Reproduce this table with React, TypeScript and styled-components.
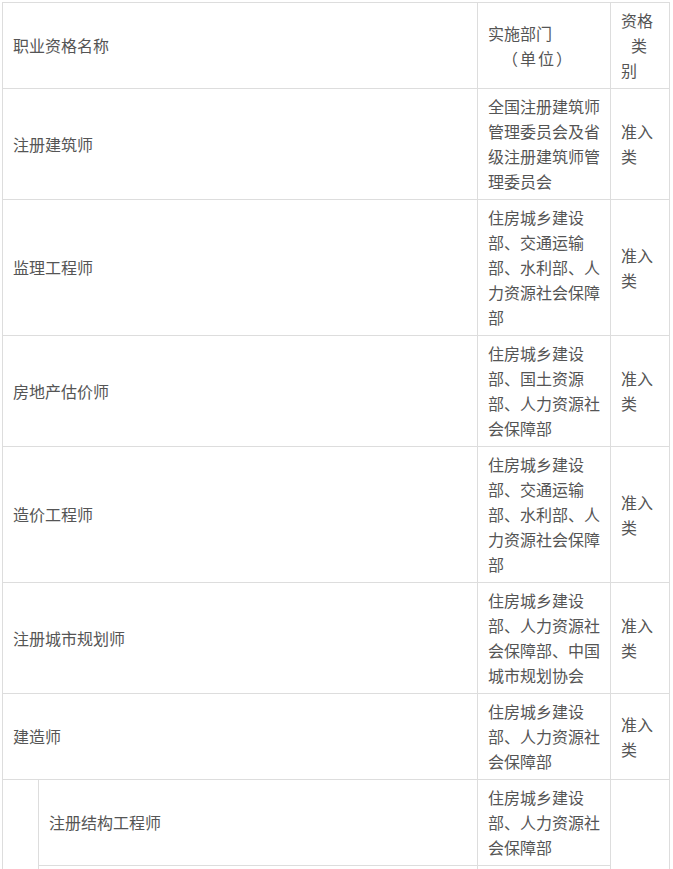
import React from "react";
import styled, { createGlobalStyle, css } from "styled-components";

const GlobalStyle = createGlobalStyle`
  html, body {
    margin: 0;
    padding: 0;
    background: #ffffff;
  }
  body {
    font-family: "Microsoft YaHei", "Noto Sans CJK SC", "Noto Sans", sans-serif;
  }
`;

const Page = styled.div`
  padding: 2px;
`;

const Table = styled.table`
  width: 668px;
  border-collapse: collapse;
  table-layout: fixed;
  color: #555555;
  font-size: 16px;
  line-height: 25px;
`;

const Cell = styled.td<{ $center?: boolean }>`
  border: 1px solid #dddddd;
  padding: 5px 10px;
  vertical-align: middle;
  word-break: break-all;
  ${(props) =>
    props.$center &&
    css`
      text-align: center;
    `}
`;

const Indent = styled.span<{ $size: number }>`
  display: inline-block;
  width: ${(props) => props.$size}px;
`;

const Paren = styled.span`
  font-feature-settings: "fwid" 1;
  letter-spacing: 2px;
`;

interface Row {
  name: string;
  dept: string;
  type: string;
}

const rows: Row[] = [
  { name: "注册建筑师", dept: "全国注册建筑师管理委员会及省级注册建筑师管理委员会", type: "准入类" },
  { name: "监理工程师", dept: "住房城乡建设部、交通运输部、水利部、人力资源社会保障部", type: "准入类" },
  { name: "房地产估价师", dept: "住房城乡建设部、国土资源部、人力资源社会保障部", type: "准入类" },
  { name: "造价工程师", dept: "住房城乡建设部、交通运输部、水利部、人力资源社会保障部", type: "准入类" },
  { name: "注册城市规划师", dept: "住房城乡建设部、人力资源社会保障部、中国城市规划协会", type: "准入类" },
  { name: "建造师", dept: "住房城乡建设部、人力资源社会保障部", type: "准入类" },
];

// the second sub-row continues below the visible area
const subRows = [
  { name: "注册结构工程师", dept: "住房城乡建设部、人力资源社会保障部" },
  { name: "", dept: "" },
];

const App = () => {
  return (
    <Page>
      <GlobalStyle />
      <Table>
        <colgroup>
          <col style={{ width: 36 }} />
          <col style={{ width: 439 }} />
          <col style={{ width: 133 }} />
          <col style={{ width: 59 }} />
        </colgroup>
        <tbody>
          <tr>
            <Cell colSpan={2}>职业资格名称</Cell>
            <Cell>
              实施部门
              <br />
              <Indent $size={14} />
              <Paren>（单位）</Paren>
            </Cell>
            <Cell>
              资格
              <br />
              <Indent $size={10} />类
              <br />
              别
            </Cell>
          </tr>
          {rows.map((row) => (
            <tr key={row.name}>
              <Cell colSpan={2}>{row.name}</Cell>
              <Cell>{row.dept}</Cell>
              <Cell>{row.type}</Cell>
            </tr>
          ))}
          {subRows.map((row, i) => (
            <tr key={i}>
              {i === 0 && <Cell rowSpan={subRows.length} />}
              <Cell>{row.name}</Cell>
              <Cell>{row.dept}</Cell>
              {i === 0 && <Cell rowSpan={subRows.length} />}
            </tr>
          ))}
        </tbody>
      </Table>
    </Page>
  );
};

export default App;
